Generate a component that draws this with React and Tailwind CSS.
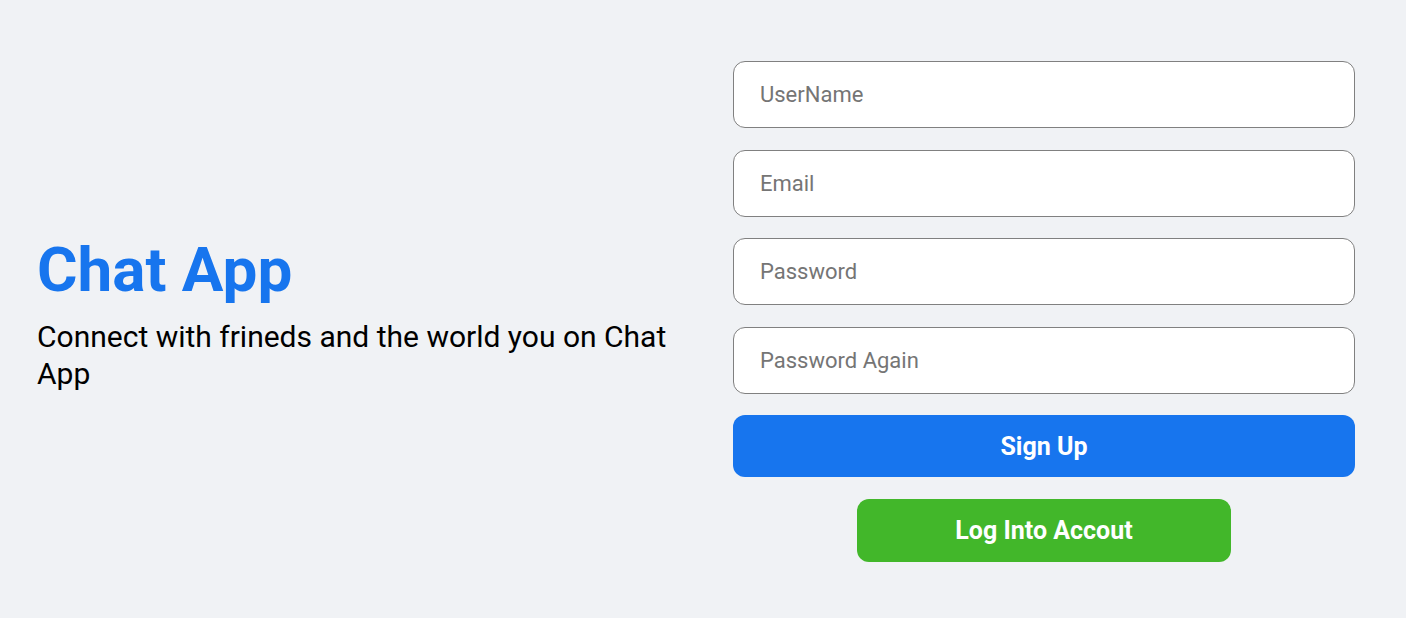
export default function App() {
  return (
    <div className="h-[618px] w-full bg-[#f0f2f5] flex items-center pl-[37px] pr-[51px] font-['Roboto',sans-serif]">
      {/* left */}
      <div className="flex-1 pr-[20px] mt-[12px]">
        <h3 className="text-[62px] leading-none font-bold text-[#1775ee] mb-[17px]">Chat App</h3>
        <span className="block max-w-[660px] text-[30px] leading-[37px] text-black">
          Connect with frineds and the world you on Chat App
        </span>
      </div>

      {/* right */}
      <div className="w-[622px] mt-[5px] flex flex-col gap-[21.5px]">
        <input
          placeholder="UserName"
          className="h-[67px] w-full bg-white rounded-[12px] border border-[#808080] pl-[26px] text-[22px] placeholder:text-[#757575] outline-none"
        />
        <input
          placeholder="Email"
          type="email"
          className="h-[67px] w-full bg-white rounded-[12px] border border-[#808080] pl-[26px] text-[22px] placeholder:text-[#757575] outline-none"
        />
        <input
          placeholder="Password"
          type="password"
          className="h-[67px] w-full bg-white rounded-[12px] border border-[#808080] pl-[26px] text-[22px] placeholder:text-[#757575] outline-none"
        />
        <input
          placeholder="Password Again"
          type="password"
          className="h-[67px] w-full bg-white rounded-[12px] border border-[#808080] pl-[26px] text-[22px] placeholder:text-[#757575] outline-none"
        />
        <button className="h-[62px] w-full rounded-[12px] bg-[#1775ee] text-white text-[25px] font-bold">
          Sign Up
        </button>
        <button className="h-[63px] w-[374px] self-center rounded-[12px] bg-[#42b72a] text-white text-[25px] font-bold">
          Log Into Accout
        </button>
      </div>
    </div>
  );
}
